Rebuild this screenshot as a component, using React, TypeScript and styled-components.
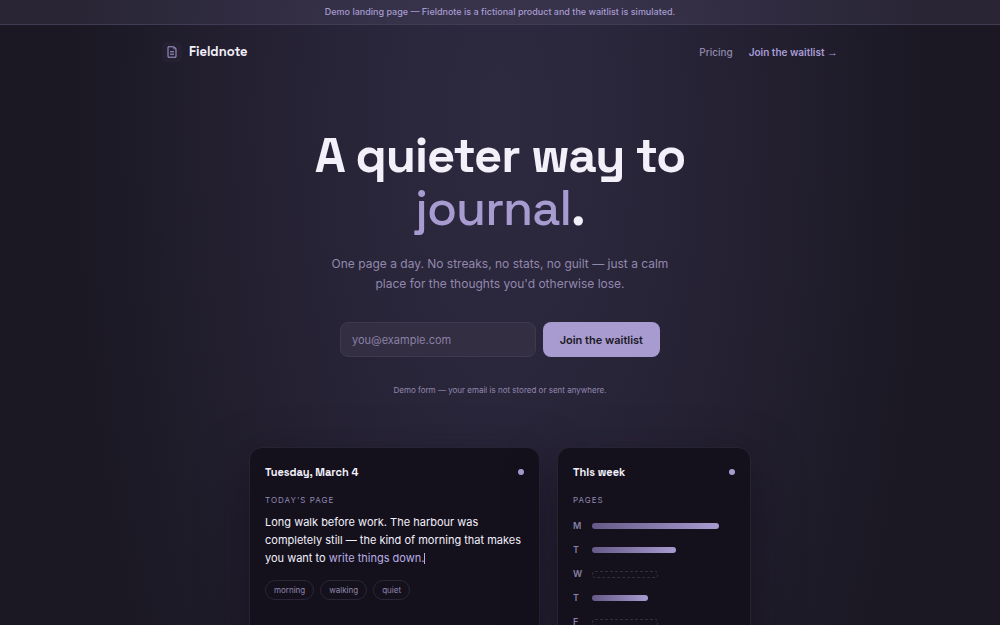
import React from 'react';
import styled, { createGlobalStyle } from 'styled-components';

const GlobalStyle = createGlobalStyle`
  *, *::before, *::after { box-sizing: border-box; }
  html { background: #1b1824; }
  body {
    margin: 0;
    font-family: Inter, "Liberation Sans", sans-serif;
    color: #f3f0fa;
    background: radial-gradient(ellipse 43% 1000px at 50% 120px, #2d293f 0%, #292539 35%, #1b1824 100%) #1b1824;
  }
  h1, h2, h3, p, ul { margin: 0; padding: 0; }
  ul { list-style: none; }
  a { text-decoration: none; }
`;

const display = '"Space Grotesk", Inter, "Liberation Sans", sans-serif';

const Banner = styled.p`
  padding: 5px 16px;
  border-bottom: 1px solid #413b53;
  background: rgba(167, 155, 208, 0.1);
  color: #a79bd0;
  font-size: 9px;
  font-weight: 500;
  line-height: 14px;
  text-align: center;
`;

const Header = styled.header`
  display: flex;
  align-items: center;
  justify-content: space-between;
  max-width: 708px;
  margin: 0 auto;
  padding: 16px;
`;

const Brand = styled.a`
  display: flex;
  align-items: center;
  gap: 7px;
  color: #f3f0fa;
  font-family: ${display};
  font-size: 13px;
  font-weight: 600;
  line-height: 22px;
`;

const BrandMark = styled.span`
  display: grid;
  place-items: center;
  width: 20px;
  height: 20px;
  border-radius: 5px;
  background: rgba(167, 155, 208, 0.04);
  color: #a79bd0;
`;

const Nav = styled.nav`
  display: flex;
  gap: 16px;
`;

const NavLink = styled.a<{ $accent?: boolean }>`
  color: ${p => (p.$accent ? '#a99cd6' : '#9088aa')};
  font-size: 10px;
  font-weight: ${p => (p.$accent ? 600 : 500)};
  line-height: 16px;
`;

const Arrow = styled.span`
  font-family: "Liberation Sans", sans-serif;
  font-size: 11px;
`;

const Hero = styled.section`
  display: flex;
  flex-direction: column;
  align-items: center;
  padding: 50px 16px 0;
  text-align: center;
`;

const Title = styled.h1`
  max-width: 460px;
  font-family: ${display};
  font-size: 49px;
  font-weight: 600;
  letter-spacing: -1px;
  line-height: 53px;
`;

const Accent = styled.span`
  color: #a79bd0;
  font-weight: 500;
`;

const Lead = styled.p`
  max-width: 360px;
  margin-top: 19px;
  color: #9288ad;
  font-size: 12px;
  line-height: 20px;
`;

const Form = styled.form`
  display: flex;
  gap: 7px;
  width: 100%;
  max-width: 320px;
  margin-top: 28px;
`;

const Email = styled.input`
  flex: 1;
  min-width: 0;
  height: 35px;
  padding: 0 11px;
  border: 1px solid #3f3950;
  border-radius: 8px;
  background: #332e41;
  color: #f3f0fa;
  font: 400 11px/16px Inter, "Liberation Sans", sans-serif;
  &::placeholder { color: #8a80a6; opacity: 1; }
`;

const Submit = styled.button`
  height: 35px;
  padding: 0 17px;
  border: 0;
  border-radius: 8px;
  background: #a79bd0;
  color: #1b1824;
  font: 600 11px/16px Inter, "Liberation Sans", sans-serif;
`;

const Note = styled.p`
  margin-top: 26px;
  color: #9288b0;
  font-size: 8px;
  line-height: 14px;
`;

const Cards = styled.section`
  display: grid;
  grid-template-columns: 3fr 2fr;
  gap: 17px;
  max-width: 534px;
  margin: 50px auto 0;
  padding: 0 16px 64px;
`;

const Card = styled.article`
  padding: 15px;
  border: 1px solid #272333;
  border-radius: 13px;
  background: #14111d;
  box-shadow: 0 16px 48px rgba(15, 12, 24, 0.5);
`;

const CardHead = styled.header`
  display: flex;
  align-items: center;
  justify-content: space-between;
`;

const CardTitle = styled.h2`
  font-family: ${display};
  font-size: 11px;
  font-weight: 600;
  line-height: 18px;
`;

const Dot = styled.span`
  width: 6px;
  height: 6px;
  border-radius: 50%;
  background: #a79bd0;
`;

const Eyebrow = styled.h3`
  margin-top: 12px;
  color: #9288b0;
  font-size: 8px;
  font-weight: 400;
  letter-spacing: 1px;
  line-height: 14px;
  text-transform: uppercase;
`;

const Entry = styled.p`
  margin-top: 6px;
  font-size: 11px;
  line-height: 18px;
`;

const Written = styled.span`
  color: #b9ace2;
`;

const Caret = styled.span`
  display: inline-block;
  width: 1px;
  height: 11px;
  background: #b9ace2;
  vertical-align: -2px;
`;

const Tags = styled.ul`
  display: flex;
  flex-wrap: wrap;
  gap: 6px;
  margin-top: 13px;
`;

const Tag = styled.li`
  padding: 2px 8px;
  border: 1px solid #2a2637;
  border-radius: 10px;
  color: #9288ad;
  font-size: 8px;
  line-height: 14px;
`;

const Week = styled.ul`
  display: grid;
  gap: 10px;
  margin-top: 12px;
`;

const Day = styled.li`
  display: grid;
  grid-template-columns: 12px 1fr;
  align-items: center;
  gap: 7px;
  color: #8a80a6;
  font-size: 9px;
  font-weight: 600;
  line-height: 14px;
`;

const Bar = styled.span<{ $empty: boolean }>`
  height: ${p => (p.$empty ? 7 : 6)}px;
  border: ${p => (p.$empty ? '1px dashed #322e40' : '0')};
  border-radius: 3px;
  background: ${p => (p.$empty ? 'none' : 'linear-gradient(90deg, #655a87, #a79bd0)')};
`;

const week = [
  { day: 'M', pages: 89 },
  { day: 'T', pages: 59 },
  { day: 'W', pages: 0 },
  { day: 'T', pages: 39 },
  { day: 'F', pages: 0 },
  { day: 'S', pages: 70 },
  { day: 'S', pages: 50 },
];

export default function App() {
  return (
    <>
      <GlobalStyle />
      <Banner>Demo landing page — Fieldnote is a fictional product and the waitlist is simulated.</Banner>
      <Header>
        <Brand href="#">
          <BrandMark>
            <svg width="10" height="12" viewBox="0 0 10 12" fill="none" stroke="currentColor" strokeLinejoin="round" aria-hidden="true">
              <path d="M1 .8h5.8L9 2.4v8.8H1z" />
              <path d="M6.6 1v1.8H9" strokeWidth=".6" />
              <path d="M3 5.8h4M3 8.2h4" />
            </svg>
          </BrandMark>
          Fieldnote
        </Brand>
        <Nav>
          <NavLink href="#pricing">Pricing</NavLink>
          <NavLink href="#waitlist" $accent>Join the waitlist <Arrow>→</Arrow></NavLink>
        </Nav>
      </Header>
      <main>
        <Hero>
          <Title>A quieter way to <Accent>journal</Accent>.</Title>
          <Lead>One page a day. No streaks, no stats, no guilt — just a calm place for the thoughts you'd otherwise lose.</Lead>
          <Form id="waitlist" onSubmit={e => e.preventDefault()}>
            <Email type="email" aria-label="Email address" placeholder="you@example.com" />
            <Submit type="submit">Join the waitlist</Submit>
          </Form>
          <Note>Demo form — your email is not stored or sent anywhere.</Note>
        </Hero>
        <Cards>
          <Card>
            <CardHead><CardTitle>Tuesday, March 4</CardTitle><Dot /></CardHead>
            <Eyebrow>Today's page</Eyebrow>
            <Entry>
              Long walk before work. The harbour was completely still — the kind of morning that makes you want to <Written>write things down.</Written><Caret />
            </Entry>
            <Tags>
              <Tag>morning</Tag>
              <Tag>walking</Tag>
              <Tag>quiet</Tag>
            </Tags>
          </Card>
          <Card>
            <CardHead><CardTitle>This week</CardTitle><Dot /></CardHead>
            <Eyebrow>Pages</Eyebrow>
            <Week>
              {week.map((d, i) => (
                <Day key={i}>
                  {d.day}
                  <Bar $empty={d.pages === 0} style={{ width: `${d.pages || 46}%` }} />
                </Day>
              ))}
            </Week>
          </Card>
        </Cards>
      </main>
    </>
  );
}
